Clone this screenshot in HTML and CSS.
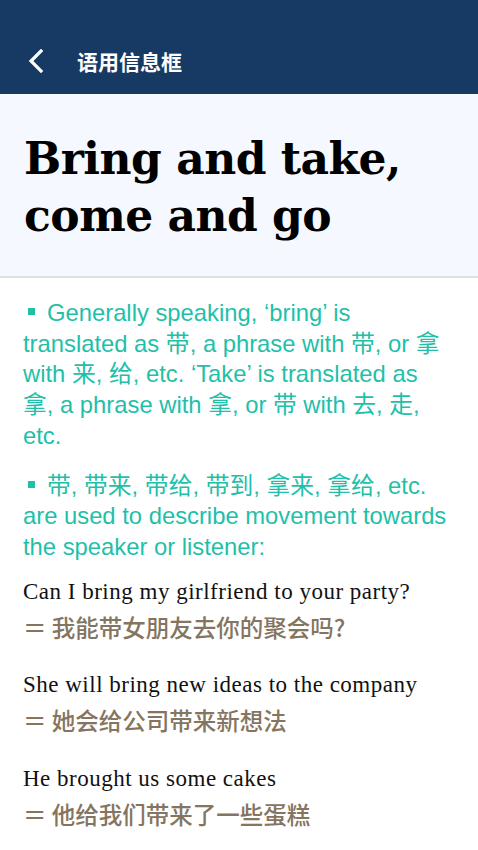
FILE: index.html
```html
<!DOCTYPE html>
<html lang="zh">
<head>
<meta charset="utf-8">
<link rel="stylesheet" href="styles.css">
</head>
<body>
<header class="topbar">
  <svg class="back" width="16" height="24" viewBox="0 0 16 24"><path d="M13 2 L3 12 L13 22" fill="none" stroke="#fff" stroke-width="3.2" stroke-linecap="square"/></svg>
  <span class="topbar-title">语用信息框</span>
</header>
<section class="hero">
  <h1>Bring and take, come and go</h1>
</section>
<main class="content">
  <div class="notes">
    <p class="note"><span class="bullet"></span>Generally speaking, ‘bring’ is translated as 带, a phrase with 带, or 拿 with 来, 给, etc. ‘Take’ is translated as 拿, a phrase with 拿, or 带 with 去, 走, etc.</p>
    <p class="note"><span class="bullet"></span>带, 带来, 带给, 带到, 拿来, 拿给, etc. are used to describe movement towards the speaker or listener:</p>
  </div>
  <div class="examples">
    <div class="example">
      <p class="en">Can I bring my girlfriend to your party?</p>
      <p class="zh">＝ 我能带女朋友去你的聚会吗?</p>
    </div>
    <div class="example">
      <p class="en">She will bring new ideas to the company</p>
      <p class="zh">＝ 她会给公司带来新想法</p>
    </div>
    <div class="example">
      <p class="en">He brought us some cakes</p>
      <p class="zh">＝ 他给我们带来了一些蛋糕</p>
    </div>
  </div>
</main>
</body>
</html>
```
FILE: styles.css
```css
html, body { margin: 0; padding: 0; background: #fff; }
body { width: 478px; overflow: hidden; }
p { margin: 0; }
.topbar {
  height: 94px;
  background: #163a64;
  display: flex;
  align-items: center;
  padding: 28px 0 0 28px;
  box-sizing: border-box;
}
.back { display: block; flex: none; }
.topbar-title {
  margin-left: 33px;
  color: #fff;
  font-family: "Noto Sans CJK SC", sans-serif;
  font-weight: 700;
  font-size: 21px;
}
.hero {
  background: #f5f8ff;
  border-bottom: 2px solid #dedfe2;
  padding: 36px 24px 32px 24px;
}
.hero h1 {
  margin: 0;
  font-family: "DejaVu Serif", serif;
  font-weight: 700;
  font-size: 44px;
  line-height: 57px;
  color: #000;
  letter-spacing: -0.5px;
}
.content { padding: 20px 26px 0 23px; }
.notes { display: flex; flex-direction: column; gap: 19px; }
.note {
  font-family: "Liberation Sans", "Noto Sans CJK SC", sans-serif;
  font-size: 23.8px;
  line-height: 30.7px;
  color: #1fbfa9;
}
.bullet {
  display: inline-block;
  width: 7px;
  height: 7px;
  background: #1fbfa9;
  margin: 0 12px 0 5px;
  vertical-align: 6px;
}
.examples { margin-top: 14px; display: flex; flex-direction: column; gap: 24.5px; }
.en {
  font-family: "Liberation Serif", serif;
  font-size: 23px;
  letter-spacing: 0.5px;
  line-height: 30px;
  color: #111;
}
.zh {
  font-family: "Noto Sans CJK SC", sans-serif;
  font-size: 23.5px;
  line-height: 38px;
  color: #857560;
  font-weight: 500;
  margin-top: 1px;
}
```
